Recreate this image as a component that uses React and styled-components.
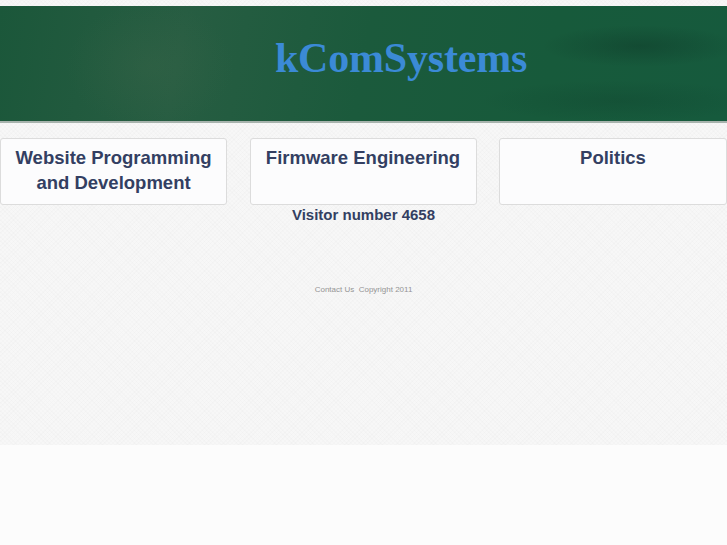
import React from "react";
import styled, { createGlobalStyle } from "styled-components";

const Global = createGlobalStyle`
  html, body { margin: 0; padding: 0; background: #fcfcfc; }
  body { font-family: "Liberation Sans", Arial, sans-serif; }
`;

const Page = styled.div`
  width: 727px;
  min-height: 545px;
  background: #fcfcfc;
`;

const Textured = styled.div`
  height: 445px;
  padding-top: 6px;
  box-sizing: border-box;
  background-color: #f7f7f7;
  background-image:
    repeating-linear-gradient(45deg, rgba(0,0,0,0.01) 0 1px, transparent 1px 3px),
    repeating-linear-gradient(-45deg, rgba(0,0,0,0.01) 0 1px, transparent 1px 3px);
`;

const Banner = styled.header`
  height: 117px;
  display: flex;
  align-items: center;
  justify-content: center;
  padding-left: 75px;
  padding-bottom: 12px;
  box-sizing: border-box;
  background:
    radial-gradient(ellipse 140px 30px at 640px 40px, rgba(10,40,30,0.3), transparent 70%),
    radial-gradient(ellipse 120px 90px at 150px 60px, rgba(80,110,80,0.18), transparent 70%),
    radial-gradient(ellipse 200px 30px at 620px 95px, rgba(10,50,35,0.2), transparent 70%),
    linear-gradient(100deg, #1b573a 0%, #275d42 25%, #1b5a3c 50%, #175a3b 75%, #165a3d 100%);
  border-bottom: 2px solid #a7b3ad;
`;

const Logo = styled.h1`
  margin: 0;
  font-family: "Liberation Serif", "Times New Roman", serif;
  font-weight: bold;
  font-size: 42px;
  color: #3b8ad6;
  letter-spacing: -0.2px;
`;

const Cards = styled.div`
  margin-top: 15px;
  display: grid;
  grid-template-columns: 227px 227px 228px;
  column-gap: 22.5px;
`;

const Card = styled.div`
  height: 67px;
  box-sizing: border-box;
  border: 1px solid #dcdcdc;
  border-radius: 3px;
  background: #fcfcfd;
  padding-top: 6px;
  text-align: center;
  font-weight: bold;
  font-size: 18.5px;
  line-height: 25px;
  color: #333f62;
`;

const Visitor = styled.div`
  text-align: center;
  font-weight: bold;
  font-size: 15px;
  line-height: 20px;
  color: #333f62;
`;

const Footer = styled.div`
  margin-top: 60px;
  text-align: center;
  font-size: 8px;
  color: #949494;
`;

export default function App() {
  return (
    <Page>
      <Global />
      <Textured>
        <Banner>
          <Logo>kComSystems</Logo>
        </Banner>
        <Cards>
          <Card>Website Programming<br />and Development</Card>
          <Card>Firmware Engineering</Card>
          <Card>Politics</Card>
        </Cards>
        <Visitor>Visitor number 4658</Visitor>
        <Footer>Contact Us&nbsp; Copyright 2011</Footer>
      </Textured>
    </Page>
  );
}
